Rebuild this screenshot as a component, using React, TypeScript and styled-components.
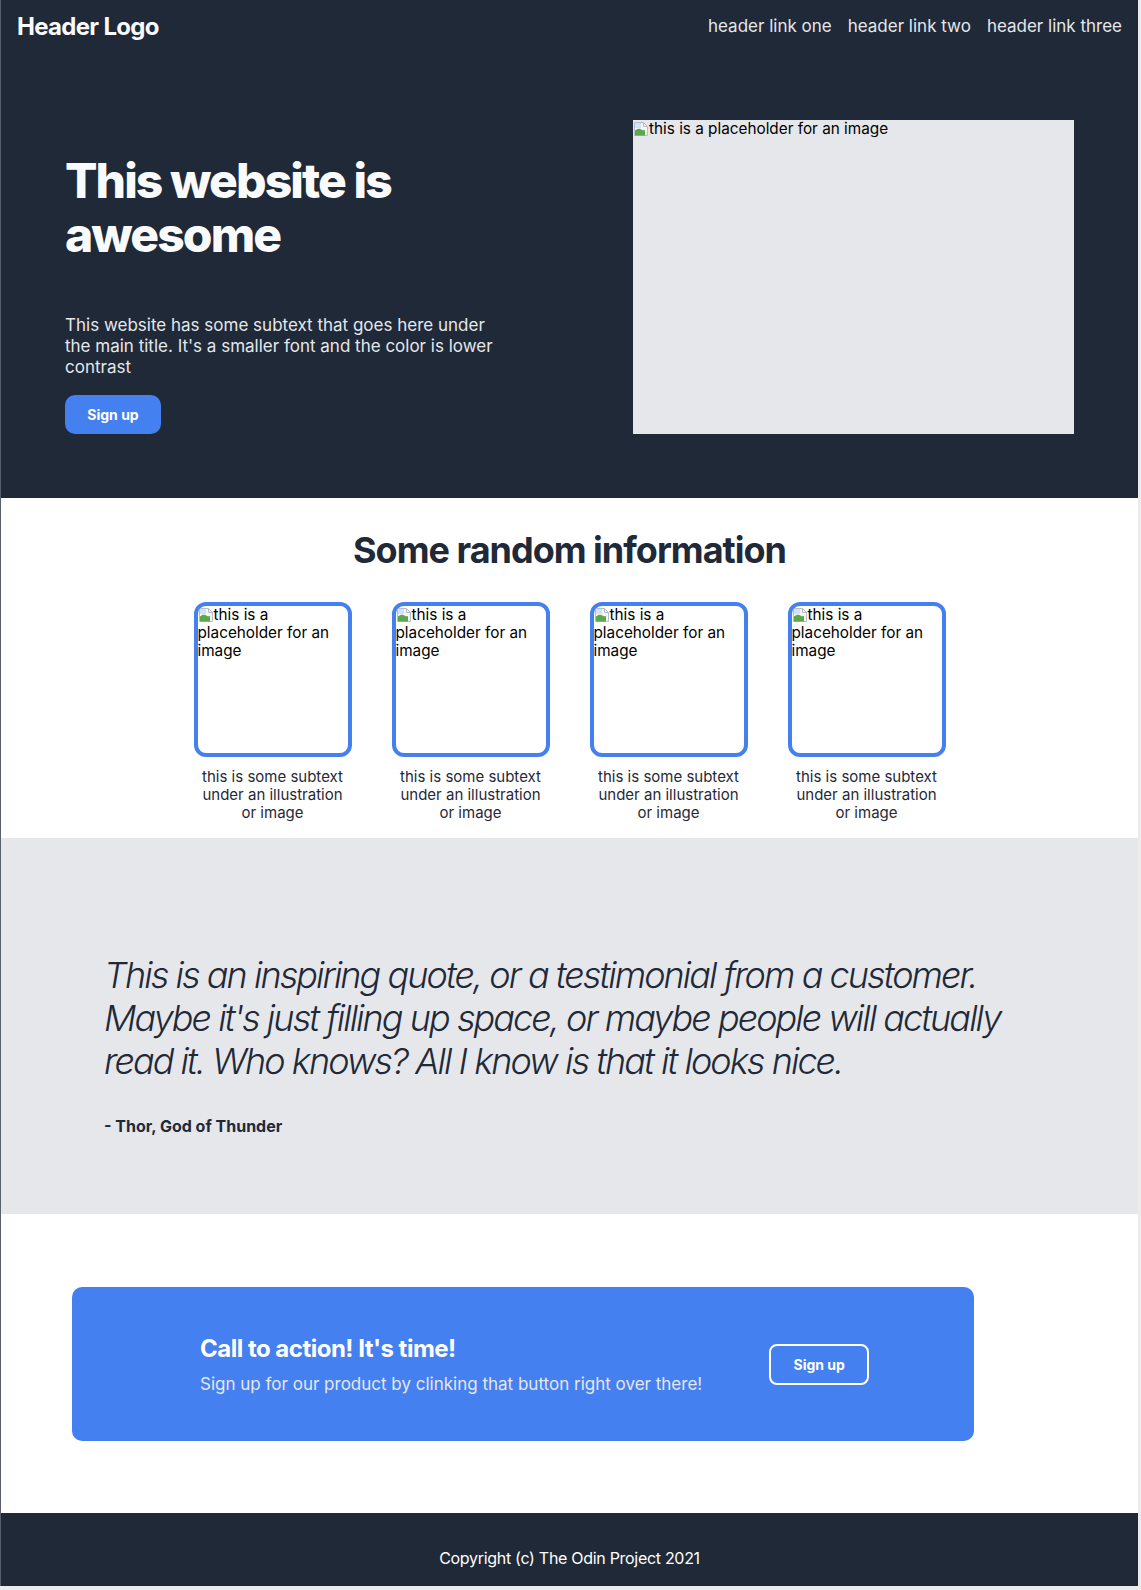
import styled, { createGlobalStyle } from 'styled-components';

// ─── Global ───────────────────────────────────────────────────────────────────

const GlobalStyle = createGlobalStyle`
  * { box-sizing: border-box; }
  body {
    margin: 0;
    background: #ececec;
    font-family: Inter, "Noto Sans", Arial, sans-serif;
  }
`;

const BLUE = '#4580f0';
const DARK = '#1f2937';

// ─── Styled ───────────────────────────────────────────────────────────────────

const Page = styled.div`
  width: 1138px;
  background: #ffffff;
  border-left: 1px solid #59606c;
`;

const Header = styled.header`
  height: 52px;
  padding: 0 16px;
  display: flex;
  align-items: center;
  justify-content: space-between;
  background: ${DARK};
`;

const Logo = styled.div`
  font-size: 24px;
  font-weight: 700;
  letter-spacing: -0.7px;
  color: #f9fafb;
`;

const Nav = styled.nav`
  display: flex;
  gap: 16px;
`;

const NavLink = styled.a`
  font-size: 17px;
  color: #e5e7eb;
  text-decoration: none;
`;

const Hero = styled.section`
  padding: 68px 64px 64px;
  display: flex;
  align-items: flex-end;
  justify-content: space-between;
  background: ${DARK};
`;

const HeroText = styled.div`
  width: 436px;
`;

const Title = styled.h1`
  margin: 0 0 53px;
  font-size: 48px;
  font-weight: 800;
  letter-spacing: -1.9px;
  line-height: 54px;
  color: #f9fafb;
`;

const Lead = styled.p`
  margin: 0 0 17px;
  font-size: 17px;
  line-height: 21px;
  color: #e5e7eb;
`;

const Button = styled.button<{ $outline?: boolean }>`
  width: ${({ $outline }) => ($outline ? '100px' : '96px')};
  height: ${({ $outline }) => ($outline ? '41px' : '39px')};
  border-radius: ${({ $outline }) => ($outline ? '8px' : '10px')};
  border: ${({ $outline }) => ($outline ? '2px solid #ffffff' : 'none')};
  background: ${({ $outline }) => ($outline ? 'transparent' : BLUE)};
  color: #ffffff;
  font-family: inherit;
  font-size: 14px;
  font-weight: 700;
  cursor: pointer;
  flex-shrink: 0;
`;

const Placeholder = styled.div<{ $w: number; $h: number; $card?: boolean }>`
  width: ${({ $w }) => $w}px;
  height: ${({ $h }) => $h}px;
  background: ${({ $card }) => ($card ? '#ffffff' : '#e5e7eb')};
  border: ${({ $card }) => ($card ? `4px solid ${BLUE}` : 'none')};
  border-radius: ${({ $card }) => ($card ? '12px' : '0')};
  font-size: 15.3px;
  line-height: 18px;
  color: #000000;
  overflow: hidden;
  flex-shrink: 0;
`;

const BrokenIcon = styled.svg`
  width: 16px;
  height: 16px;
  vertical-align: -3px;
`;

const Info = styled.section`
  padding: 31px 0 16px;
`;

const SectionTitle = styled.h2`
  margin: 0 0 30px;
  text-align: center;
  font-size: 36px;
  font-weight: 700;
  letter-spacing: -1px;
  line-height: 43px;
  color: ${DARK};
`;

const Cards = styled.div`
  display: flex;
  justify-content: center;
  gap: 40px;
`;

const Card = styled.div`
  width: 158px;
  display: flex;
  flex-direction: column;
  align-items: center;
`;

const Caption = styled.p`
  width: 156px;
  margin: 11px 0 0;
  text-align: center;
  font-size: 15px;
  line-height: 18px;
  color: ${DARK};
`;

const QuoteSection = styled.section`
  padding: 116px 103px 78px;
  background: #e5e7eb;
`;

const Quote = styled.blockquote`
  margin: 0;
  max-width: 930px;
  font-size: 36px;
  font-style: italic;
  font-weight: 300;
  letter-spacing: -1.95px;
  line-height: 43px;
  color: ${DARK};
`;

const Author = styled.p`
  margin: 34px 0 0;
  font-size: 16px;
  font-weight: 700;
  line-height: 19px;
  color: ${DARK};
`;

const CtaSection = styled.section`
  padding: 73px 0 72px 71px;
`;

const CtaBox = styled.div`
  width: 902px;
  height: 154px;
  padding-left: 128px;
  display: flex;
  align-items: center;
  gap: 67px;
  border-radius: 10px;
  background: ${BLUE};
`;

const CtaTitle = styled.h3`
  margin: 0 0 10px;
  font-size: 24px;
  font-weight: 700;
  letter-spacing: -0.5px;
  line-height: 29px;
  color: #ffffff;
`;

const CtaText = styled.p`
  margin: 0;
  font-size: 17px;
  line-height: 22px;
  color: #e5e7eb;
`;

const Footer = styled.footer`
  padding: 36px 0 18px;
  text-align: center;
  font-size: 16px;
  letter-spacing: -0.3px;
  line-height: 19px;
  color: #ffffff;
  background: ${DARK};
`;

// ─── Component ────────────────────────────────────────────────────────────────

const ALT = 'this is a placeholder for an image';

function Broken() {
  return (
    <BrokenIcon viewBox="0 0 16 16">
      <path d="M1.5 1.5h9l4 4v9h-13z" fill="#f4f6fa" stroke="#b8bcc4" />
      <path d="M10.5 1.5v4h4" fill="none" stroke="#b8bcc4" />
      <path d="M2 9.5c2-1.5 3.5-2 5-1.5s3 2 5 1v5.5H2z" fill="#5aa84a" />
      <path d="M2 2h6v5H2z" fill="#cfe2f7" />
    </BrokenIcon>
  );
}

export default function App() {
  return (
    <>
      <GlobalStyle />
      <Page>
        <Header>
          <Logo>Header Logo</Logo>
          <Nav>
            <NavLink>header link one</NavLink>
            <NavLink>header link two</NavLink>
            <NavLink>header link three</NavLink>
          </Nav>
        </Header>

        <Hero>
          <HeroText>
            <Title>This website is awesome</Title>
            <Lead>
              This website has some subtext that goes here under the main title. It's a smaller
              font and the color is lower contrast
            </Lead>
            <Button>Sign up</Button>
          </HeroText>
          <Placeholder $w={441} $h={314}>
            <Broken />
            {ALT}
          </Placeholder>
        </Hero>

        <Info>
          <SectionTitle>Some random information</SectionTitle>
          <Cards>
            {[0, 1, 2, 3].map((i) => (
              <Card key={i}>
                <Placeholder $w={158} $h={155} $card>
                  <Broken />
                  {ALT}
                </Placeholder>
                <Caption>this is some subtext under an illustration or image</Caption>
              </Card>
            ))}
          </Cards>
        </Info>

        <QuoteSection>
          <Quote>
            This is an inspiring quote, or a testimonial from a customer. Maybe it's just filling up
            space, or maybe people will actually read it. Who knows? All I know is that it looks
            nice.
          </Quote>
          <Author>- Thor, God of Thunder</Author>
        </QuoteSection>

        <CtaSection>
          <CtaBox>
            <div>
              <CtaTitle>Call to action! It's time!</CtaTitle>
              <CtaText>Sign up for our product by clinking that button right over there!</CtaText>
            </div>
            <Button $outline>Sign up</Button>
          </CtaBox>
        </CtaSection>

        <Footer>Copyright (c) The Odin Project 2021</Footer>
      </Page>
    </>
  );
}
